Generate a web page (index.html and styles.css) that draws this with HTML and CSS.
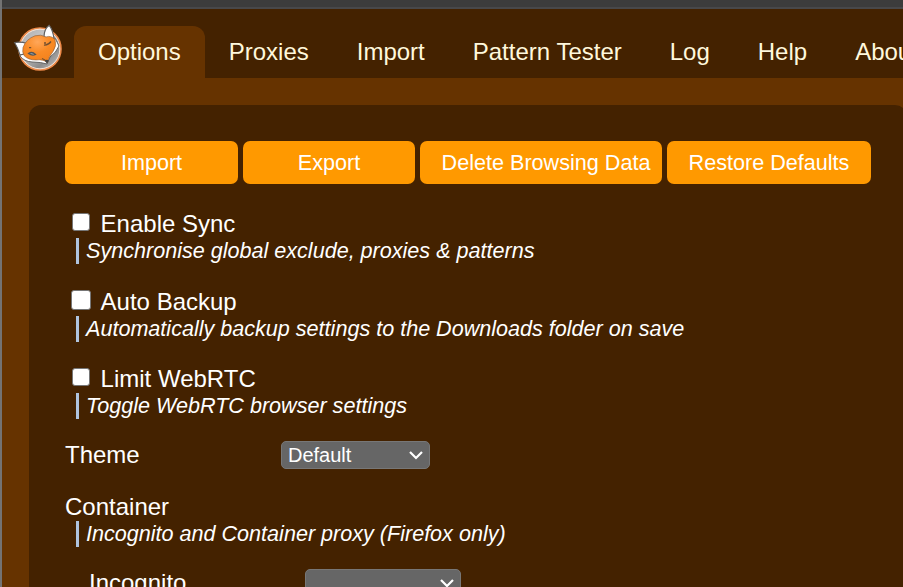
FILE: index.html
```html
<!DOCTYPE html>
<html lang="en">
<head>
<meta charset="utf-8">
<title>Options</title>
<link rel="stylesheet" href="styles.css">
</head>
<body>
<div class="chrome"></div>
<nav class="nav">
  <svg class="logo" viewBox="0 0 58 56" aria-hidden="true">
    <defs>
      <linearGradient id="disc" x1="0" y1="0" x2="1" y2="1">
        <stop offset="0" stop-color="#a8a8a8"/><stop offset=".35" stop-color="#c4c4c4"/>
        <stop offset=".7" stop-color="#8c8c8c"/><stop offset="1" stop-color="#d0d0d0"/>
      </linearGradient>
      <radialGradient id="fur" cx=".45" cy=".25" r=".75">
        <stop offset="0" stop-color="#ffa75a"/><stop offset=".5" stop-color="#f98b26"/><stop offset="1" stop-color="#f4811b"/>
      </radialGradient>
    </defs>
    <circle cx="30" cy="29" r="21" fill="url(#disc)" stroke="#ef8a48" stroke-width="1.6"/>
    <circle cx="30" cy="29" r="19.8" fill="none" stroke="#fbe3d0" stroke-width="1"/>
    <path d="M12 26 L10 36 Q14 41.500 22 42 Q31 42 37 44 L40 37 Q46 33 49 26 L45 18 Z" fill="#fff" stroke="#666" stroke-width="1"/>
    <path d="M4.600 22.500 Q11 21.500 17 23.500 L14 34 L10 35 Q8 28 4.600 22.500Z" fill="#fff" stroke="#5e5e5e" stroke-width="1.1"/>
    <path d="M39.200 5.300 Q43 10 44 19 L34 17 Q34 9 39.200 5.300Z" fill="#fff" stroke="#5e5e5e" stroke-width="1.1"/>
    <path d="M13 27.500 Q16 19 25 15.800 Q31 14 36 17 Q41 15 45 19.500 Q47 26 43 31.500 Q39 36 37.500 42.500 Q33 39 26 40 Q18 40 14 35.500 Q12 32 13 27.500Z" fill="url(#fur)" stroke="#8a5a35" stroke-width=".6"/>
    <path d="M18.500 33.500 Q22 31 25.500 34.500 Q22 36 18.500 33.500Z" fill="#9db4bd" stroke="#555" stroke-width="1.300"/>
    <path d="M34 25 Q38 25.500 41 21.500 M32 38.500 Q35 39.500 37 42 M19 27.700h2.200 M34 23h2" fill="none" stroke="#75502f" stroke-width="1.300"/>
    <path d="M34.800 40.500 Q37 39 38.800 40.500 L37 43.800Z" fill="#454545"/>
  </svg>
  <a class="tab tab-active">Options</a>
  <a class="tab">Proxies</a>
  <a class="tab">Import</a>
  <a class="tab">Pattern Tester</a>
  <a class="tab">Log</a>
  <a class="tab">Help</a>
  <a class="tab">About</a>
</nav>
<main class="panel">
  <div class="buttons">
    <button class="button">Import</button>
    <button class="button">Export</button>
    <button class="button">Delete Browsing Data</button>
    <button class="button">Restore Defaults</button>
  </div>
  <section class="option sync">
    <label class="label"><span class="check"></span>Enable Sync</label>
    <p class="note">Synchronise global exclude, proxies &amp; patterns</p>
  </section>
  <section class="option backup">
    <label class="label"><span class="check check-large"></span>Auto Backup</label>
    <p class="note">Automatically backup settings to the Downloads folder on save</p>
  </section>
  <section class="option webrtc">
    <label class="label"><span class="check"></span>Limit WebRTC</label>
    <p class="note">Toggle WebRTC browser settings</p>
  </section>
  <section class="option row">
    <span class="label name">Theme</span>
    <div class="select">Default<svg class="arrow" viewBox="0 0 14 9"><path d="M1 1l6 6 6-6"/></svg></div>
  </section>
  <section class="option container">
    <span class="label">Container</span>
    <p class="note">Incognito and Container proxy (Firefox only)</p>
  </section>
  <section class="row nested">
    <span class="label name">Incognito</span>
    <div class="select select-wide"><svg class="arrow" viewBox="0 0 14 9"><path d="M1 1l6 6 6-6"/></svg></div>
  </section>
</main>
</body>
</html>
```
FILE: styles.css
```css
* { box-sizing: border-box; }
html { height: 100%; overflow: hidden; }
body {
  height: 587px;
  margin: 0;
  overflow: hidden;
  border-left: 2px solid #737373;
  background: #630;
  color: #fff;
  font: 24px/28px "Liberation Sans", Arial, sans-serif;
}
.chrome {
  height: 9px;
  background: #3c3c3c;
  border-bottom: 2px solid #48484a;
}
.nav {
  display: flex;
  align-items: flex-end;
  height: 69px;
  background: #420;
  color: cornsilk;
}
.logo {
  flex: none;
  width: 58px;
  height: 56px;
  margin: 0 6px 2px 8px;
}
.tab {
  flex: none;
  height: 52px;
  padding: 12px 24px;
  white-space: nowrap;
}
.tab-active {
  background: #630;
  border-radius: 12px 12px 0 0;
}
.panel {
  width: 878px;
  height: 600px;
  margin: 27px 0 0 27px;
  padding: 36px;
  border-radius: 12px;
  background: #420;
}
.buttons {
  display: grid;
  grid-template-columns: 173px 172px 242px 204px;
  gap: 5px;
  margin-bottom: 26px;
}
.button {
  height: 43px;
  padding: 0;
  border: 0;
  border-radius: 7px;
  background: #f90;
  color: #fff;
  font: 21.6px/25px "Liberation Sans", Arial, sans-serif;
  white-space: nowrap;
}
.button:nth-child(3) { padding-left: 10px; }
.option { margin-bottom: 22px; }
.sync { margin-bottom: 24px; }
.backup { margin-bottom: 23px; }
.row + .container { margin-top: 24px; }
.label {
  display: flex;
  height: 28px;
}
.check {
  width: 18px;
  height: 18px;
  margin: 3px 10.6px 0 7px;
  border: 1px solid #767676;
  border-radius: 3px;
  background: #fff;
}
.check-large {
  width: 20px;
  height: 20px;
  margin: 2px 9.6px 0 6px;
}
.note {
  height: 26px;
  margin: 0 0 0 11px;
  padding-left: 7px;
  border-left: 3px solid lightsteelblue;
  font-size: 21.6px;
  font-style: italic;
  line-height: 26px;
  letter-spacing: -.01px;
  white-space: nowrap;
}
.row { display: flex; }
.name { width: 216px; }
.select {
  display: flex;
  align-items: center;
  justify-content: space-between;
  width: 149px;
  height: 28px;
  padding: 0 6px;
  border: 1px solid #777;
  border-radius: 5px;
  background: #666;
  font-size: 20px;
}
.select-wide {
  width: 156px;
  justify-content: flex-end;
}
.nested { margin-left: 24px; }
.arrow {
  width: 14px;
  height: 9px;
  fill: none;
  stroke: #fff;
  stroke-width: 2.2;
}
```
